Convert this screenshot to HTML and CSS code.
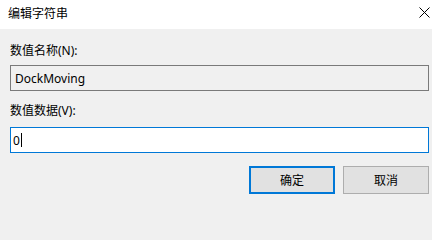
FILE: index.html
```html
<!DOCTYPE html>
<html lang="zh-CN">
<head>
<meta charset="utf-8">
<title>编辑字符串</title>
<link rel="stylesheet" href="styles.css">
</head>
<body>
<div class="dialog">
  <div class="titlebar">
    <span class="title">编辑字符串</span>
    <span class="close">
      <svg width="11" height="11" viewBox="0 0 11 11"><path d="M0.5 0.5 L10.5 10.5 M10.5 0.5 L0.5 10.5" stroke="#000" stroke-width="1" fill="none"/></svg>
    </span>
  </div>
  <div class="content">
    <div class="label label-name">数值名称(N):</div>
    <div class="field field-readonly">DockMoving</div>
    <div class="label label-data">数值数据(V):</div>
    <div class="field field-active"><span class="value">0</span><span class="caret"></span></div>
    <div class="buttons">
      <div class="btn btn-default">确定</div>
      <div class="btn">取消</div>
    </div>
  </div>
</div>
</body>
</html>
```
FILE: styles.css
```css
html, body {
  margin: 0;
  padding: 0;
}
body {
  width: 432px;
  height: 208px;
  background: #f0f0f0;
  font-family: "Noto Sans", "Noto Sans CJK SC", sans-serif;
  font-size: 12px;
  color: #000;
  overflow: hidden;
}
.dialog {
  display: flex;
  flex-direction: column;
  height: 208px;
}
.titlebar {
  height: 29px;
  background: #fff;
  display: flex;
  align-items: center;
  justify-content: space-between;
  padding: 0 2px 2px 8px;
  box-sizing: border-box;
}
.title {
  line-height: 17px;
}
.close {
  width: 11px;
  height: 11px;
  display: flex;
  margin-bottom: 2px;
}
.content {
  display: flex;
  flex-direction: column;
  padding: 13px 3px 0 10px;
}
.label {
  line-height: 17px;
  height: 17px;
}
.label-name {
  margin-bottom: 6px;
}
.label-data {
  margin-top: 11px;
  margin-bottom: 8px;
}
.field {
  height: 26px;
  box-sizing: border-box;
  display: flex;
  align-items: center;
  line-height: 17px;
}
.field-readonly {
  border: 1px solid #7a7a7a;
  background: #f0f0f0;
  padding-left: 4px;
}
.field-active {
  border: 1px solid #0078d7;
  background: #fff;
  padding-left: 2px;
}
.caret {
  display: inline-block;
  width: 1px;
  height: 14px;
  background: #000;
  margin-left: 1px;
}
.buttons {
  display: flex;
  justify-content: flex-end;
  gap: 8px;
  margin-top: 13px;
}
.btn {
  width: 86px;
  height: 28px;
  box-sizing: border-box;
  background: #e1e1e1;
  border: 1px solid #adadad;
  display: flex;
  align-items: center;
  justify-content: center;
}
.btn-default {
  border: 2px solid #0078d7;
}
```
